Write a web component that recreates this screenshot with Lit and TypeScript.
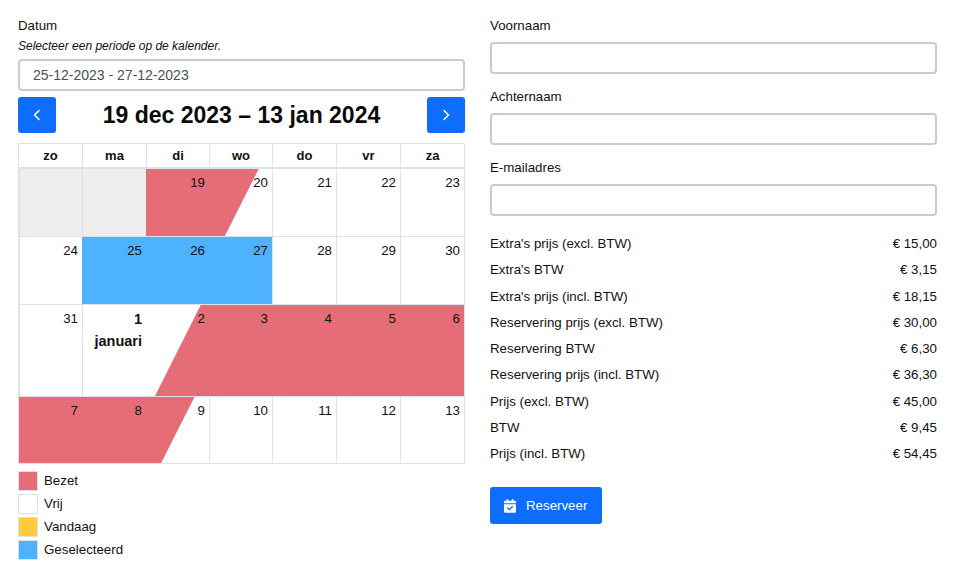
import { LitElement, html, css, svg } from "lit";
import { customElement } from "lit/decorators.js";

type Cell = { n: string; sub?: string; bold?: boolean; past?: boolean };
type Bar = { left: number; width: number; pts: string };
type Week = { h: number; cells: Cell[]; bars?: Bar[]; sel?: [number, number] };

const nums = (list: (number | string)[]): Cell[] => list.map((n) => ({ n: String(n) }));

const weeks: Week[] = [
  {
    h: 68,
    cells: [{ n: "", past: true }, { n: "", past: true }, ...nums([19, 20, 21, 22, 23])],
    bars: [{ left: 127, width: 112.7, pts: "0 0, 100% 0, 70% 100%, 0 100%" }],
  },
  { h: 68, cells: nums([24, 25, 26, 27, 28, 29, 30]), sel: [63, 253] },
  {
    h: 92,
    cells: [{ n: "31" }, { n: "1", sub: "januari", bold: true }, ...nums([2, 3, 4, 5, 6])],
    bars: [{ left: 136, width: 309, pts: "14.8% 0, 100% 0, 100% 100%, 0 100%" }],
  },
  {
    h: 67,
    cells: nums([7, 8, 9, 10, 11, 12, 13]),
    bars: [{ left: 0, width: 175.5, pts: "0 0, 100% 0, 81% 100%, 0 100%" }],
  },
];

const days = ["zo", "ma", "di", "wo", "do", "vr", "za"];
const prices: [string, string][] = [
  ["Extra's prijs (excl. BTW)", "€ 15,00"],
  ["Extra's BTW", "€ 3,15"],
  ["Extra's prijs (incl. BTW)", "€ 18,15"],
  ["Reservering prijs (excl. BTW)", "€ 30,00"],
  ["Reservering BTW", "€ 6,30"],
  ["Reservering prijs (incl. BTW)", "€ 36,30"],
  ["Prijs (excl. BTW)", "€ 45,00"],
  ["BTW", "€ 9,45"],
  ["Prijs (incl. BTW)", "€ 54,45"],
];
const legend: [string, string][] = [
  ["bezet", "Bezet"],
  ["vrij", "Vrij"],
  ["vandaag", "Vandaag"],
  ["geselecteerd", "Geselecteerd"],
];

const chevron = (d: string) => svg`<svg class="chev" viewBox="0 0 16 16" width="16" height="16" fill="none" stroke="#fff" stroke-width="1.6" stroke-linecap="round" stroke-linejoin="round"><path d=${d}></path></svg>`;

@customElement("app-root")
export class AppRoot extends LitElement {
  static styles = css`
    :host {
      display: block;
      width: 960px;
      height: 583px;
      overflow: hidden;
      background: #fff;
      color: #111;
      font-family: "Liberation Sans", Arial, sans-serif;
      font-size: 13.3px;
      line-height: 20px;
    }
    .page {
      display: grid;
      grid-template-columns: 447px 447px;
      column-gap: 25px;
      padding: 16px 0 0 18px;
    }
    .label { height: 20px; }
    .hint { font-style: italic; font-size: 12px; height: 20px; line-height: 20px; }
    .input {
      box-sizing: border-box;
      height: 32px;
      border: 2px solid #c3ccd8;
      border-radius: 4px;
      background: #fff;
      color: #495057;
      font-size: 14px;
      padding: 0 13px;
      line-height: 28px;
    }
    .hint + .input { margin-top: 3px; }
    .nav {
      display: flex;
      align-items: center;
      justify-content: space-between;
      margin-top: 5px;
      height: 37px;
    }
    .nav-btn {
      width: 38px;
      height: 36px;
      border-radius: 3px;
      background: #0d6efd;
      display: flex;
      align-items: center;
      justify-content: center;
    }
    .title { font-size: 23px; font-weight: 700; color: #0a0a0a; white-space: nowrap; }
    .cal {
      margin-top: 10px;
      border: 1px solid #dee2e6;
    }
    .row {
      position: relative;
      box-sizing: border-box;
      display: grid;
      grid-template-columns: 63px 64px 63px 63px 64px 64px 64px;
      border-top: 1px solid #dee2e6;
    }
    .head { border-top: 0; border-bottom: 1px solid #dee2e6; height: 24px; }
    .head .cell { text-align: center; font-weight: 700; padding: 0; line-height: 24px; font-size: 13px; }
    .cell {
      position: relative;
      z-index: 1;
      border-left: 1px solid #dee2e6;
      padding: 3px 4px 0 0;
      text-align: right;
      font-size: 13.3px;
      line-height: 22px;
      min-width: 0;
    }
    .cell:first-child { border-left: 0; }
    .past { background: #eeeeee; }
    .strong { font-weight: 700; font-size: 14.5px; }
    .bar { position: absolute; top: 0; bottom: 0; background: #e66c78; z-index: 2; }
    .selrange { position: absolute; top: 0; bottom: 0; background: #4db2ff; z-index: 2; }
    .cell.over { z-index: 3; background: transparent; border-left-color: transparent; }
    .legend { margin-top: 7px; display: grid; row-gap: 3px; }
    .legend-row { display: flex; align-items: center; gap: 6px; height: 20px; }
    .swatch { box-sizing: border-box; width: 20px; height: 20px; border: 1px solid #dee2e6; }
    .bezet { background: #e66c78; }
    .vrij { background: #fff; }
    .vandaag { background: #ffc93c; }
    .geselecteerd { background: #4db2ff; }
    .field + .field { margin-top: 13px; }
    .field .input { margin-top: 6px; }
    .prices { margin-top: 18px; display: grid; row-gap: 6.3px; }
    .price { display: flex; justify-content: space-between; height: 20px; }
    .reserve {
      margin-top: 23px;
      width: 112px;
      height: 37px;
      box-sizing: border-box;
      border-radius: 3px;
      background: #0d6efd;
      color: #fff;
      display: flex;
      align-items: center;
      gap: 10px;
      padding-left: 14px;
    }
  `;

  private cellOver(w: Week, i: number) {
    const x = (445 / 7) * i;
    const covers = (l: number, r: number) => l < x + 60 && r > x + 4;
    if (w.sel && covers(w.sel[0], w.sel[1])) return true;
    return (w.bars ?? []).some((b) => covers(b.left, b.left + b.width));
  }

  render() {
    return html`<div class="page">
      <div>
        <div class="label">Datum</div>
        <div class="hint">Selecteer een periode op de kalender.</div>
        <div class="input">25-12-2023 - 27-12-2023</div>
        <div class="nav">
          <div class="nav-btn">${chevron("M10 3.5 5.5 8l4.5 4.5")}</div>
          <div class="title">19 dec 2023 – 13 jan 2024</div>
          <div class="nav-btn">${chevron("M6 3.5 10.5 8 6 12.5")}</div>
        </div>
        <div class="cal">
          <div class="row head">${days.map((d) => html`<div class="cell">${d}</div>`)}</div>
          ${weeks.map(
            (w) => html`<div class="row" style="height:${w.h}px">
              ${(w.bars ?? []).map(
                (b) =>
                  html`<div class="bar" style="left:${b.left}px;width:${b.width}px;clip-path:polygon(${b.pts})"></div>`,
              )}
              ${w.sel
                ? html`<div class="selrange" style="left:${w.sel[0]}px;width:${w.sel[1] - w.sel[0]}px"></div>`
                : ""}
              ${w.cells.map(
                (c, i) =>
                  html`<div class="cell ${c.past ? "past" : ""} ${c.bold ? "strong" : ""} ${this.cellOver(w, i) ? "over" : ""}">
                    ${c.n}${c.sub ? html`<br />${c.sub}` : ""}
                  </div>`,
              )}
            </div>`,
          )}
        </div>
        <div class="legend">
          ${legend.map(
            ([k, t]) => html`<div class="legend-row"><div class="swatch ${k}"></div><div>${t}</div></div>`,
          )}
        </div>
      </div>
      <div>
        ${["Voornaam", "Achternaam", "E-mailadres"].map(
          (l) => html`<div class="field"><div class="label">${l}</div><div class="input"></div></div>`,
        )}
        <div class="prices">
          ${prices.map(([a, b]) => html`<div class="price"><span>${a}</span><span>${b}</span></div>`)}
        </div>
        <div class="reserve">
          <svg viewBox="0 0 448 512" width="12" height="13.7" fill="#fff">
            <path d="M128 0c17.7 0 32 14.3 32 32V64H288V32c0-17.7 14.3-32 32-32s32 14.3 32 32V64h48c26.5 0 48 21.5 48 48v48H0V112C0 85.5 21.5 64 48 64H96V32c0-17.7 14.3-32 32-32zM0 192H448V464c0 26.5-21.5 48-48 48H48c-26.5 0-48-21.5-48-48V192zM329 305c9.4-9.4 9.4-24.6 0-33.9s-24.6-9.4-33.9 0l-95 95-47-47c-9.4-9.4-24.6-9.4-33.9 0s-9.4 24.6 0 33.9l64 64c9.4 9.4 24.6 9.4 33.9 0L329 305z"></path>
          </svg>
          <span>Reserveer</span>
        </div>
      </div>
    </div>`;
  }
}
